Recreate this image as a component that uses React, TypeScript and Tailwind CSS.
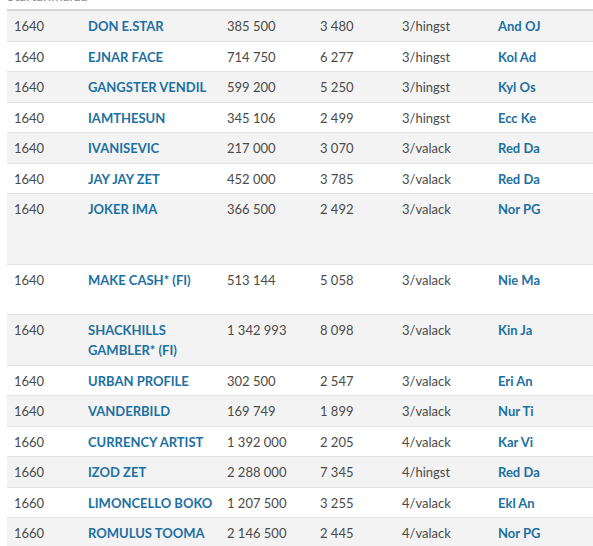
const rows: { ks: string; name: string[]; sum: string; pts: string; age: string; trainer: string; h?: string }[] = [
  { ks: "1640", name: ["DON E.STAR"], sum: "385 500", pts: "3 480", age: "3/hingst", trainer: "And OJ" },
  { ks: "1640", name: ["EJNAR FACE"], sum: "714 750", pts: "6 277", age: "3/hingst", trainer: "Kol Ad" },
  { ks: "1640", name: ["GANGSTER VENDIL"], sum: "599 200", pts: "5 250", age: "3/hingst", trainer: "Kyl Os" },
  { ks: "1640", name: ["IAMTHESUN"], sum: "345 106", pts: "2 499", age: "3/hingst", trainer: "Ecc Ke" },
  { ks: "1640", name: ["IVANISEVIC"], sum: "217 000", pts: "3 070", age: "3/valack", trainer: "Red Da" },
  { ks: "1640", name: ["JAY JAY ZET"], sum: "452 000", pts: "3 785", age: "3/valack", trainer: "Red Da" },
  { ks: "1640", name: ["JOKER IMA"], sum: "366 500", pts: "2 492", age: "3/valack", trainer: "Nor PG", h: "h-[60px]" },
  { ks: "1640", name: ["MAKE CASH* (FI)"], sum: "513 144", pts: "5 058", age: "3/valack", trainer: "Nie Ma", h: "h-[40px]" },
  { ks: "1640", name: ["SHACKHILLS", "GAMBLER* (FI)"], sum: "1 342 993", pts: "8 098", age: "3/valack", trainer: "Kin Ja" },
  { ks: "1640", name: ["URBAN PROFILE"], sum: "302 500", pts: "2 547", age: "3/valack", trainer: "Eri An" },
  { ks: "1640", name: ["VANDERBILD"], sum: "169 749", pts: "1 899", age: "3/valack", trainer: "Nur Ti" },
  { ks: "1660", name: ["CURRENCY ARTIST"], sum: "1 392 000", pts: "2 205", age: "4/valack", trainer: "Kar Vi" },
  { ks: "1660", name: ["IZOD ZET"], sum: "2 288 000", pts: "7 345", age: "4/hingst", trainer: "Red Da" },
  { ks: "1660", name: ["LIMONCELLO BOKO"], sum: "1 207 500", pts: "3 255", age: "4/valack", trainer: "Ekl An" },
  { ks: "1660", name: ["ROMULUS TOOMA"], sum: "2 146 500", pts: "2 445", age: "4/valack", trainer: "Nor PG" },
];

const cell = "pl-[7px] pt-[5px] pb-[4.5px]";

export default function App() {
  return (
    <div className="w-[593px] h-[546px] overflow-hidden bg-white pl-[7px] text-[13px] leading-[20px] text-[#4a4a4a]" style={{ fontFamily: "Lato, 'Open Sans', sans-serif" }}>
      <div className="-mt-[14px] h-[23px] text-[14px] text-[#8a8a8a]">Startanmälda</div>
      <table className="w-[600px] table-fixed border-collapse border-t-2 border-[#d4d4d4]">
        <colgroup>
          <col className="w-[74px]" />
          <col className="w-[139px]" />
          <col className="w-[93px]" />
          <col className="w-[82px]" />
          <col className="w-[96px]" />
          <col />
        </colgroup>
        <tbody>
          {rows.map((r, i) => (
            <tr key={i} className={`border-b border-[#e2e2e2] align-top ${i % 2 === 0 ? "bg-[#f3f3f3]" : "bg-white"}`}>
              <td className={cell}>
                <div className={r.h ?? ""}>{r.ks}</div>
              </td>
              <td className={`${cell} font-bold text-[#1d70a2]`}>
                {r.name.map((n, j) => (
                  <div key={j}>{n}</div>
                ))}
              </td>
              <td className={cell}>{r.sum}</td>
              <td className={cell}>{r.pts}</td>
              <td className={cell}>{r.age}</td>
              <td className={`${cell} font-bold text-[#1d70a2]`}>{r.trainer}</td>
            </tr>
          ))}
        </tbody>
      </table>
    </div>
  );
}
